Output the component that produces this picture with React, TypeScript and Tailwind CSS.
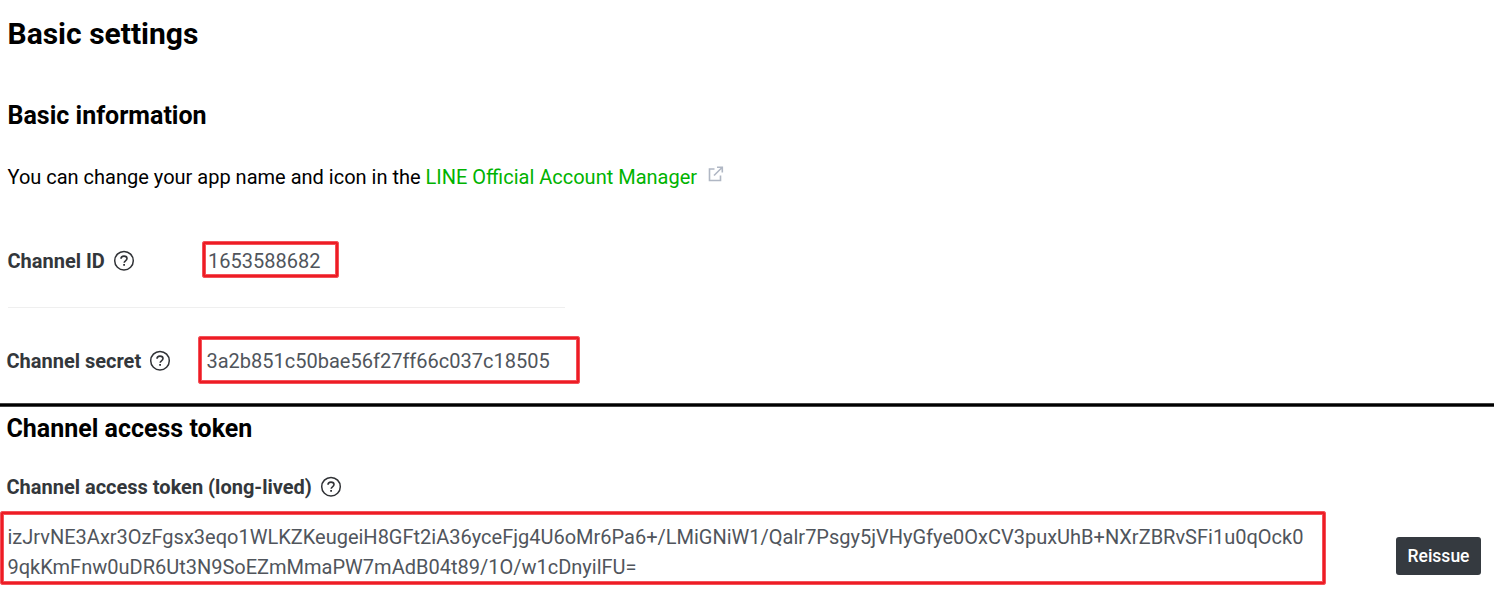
function Help() {
  return (
    <svg className="h-[22px] w-[22px] shrink-0" viewBox="0 0 22 22" fill="none" stroke="#303236">
      <circle cx="11" cy="10.7" r="9.3" strokeWidth="1.5" />
      <path d="M8 8.8C8 7.1 9.2 6.1 11 6.1c1.8 0 3 1 3 2.5 0 1.1-.6 1.6-1.5 2.2-.9.6-1.3 1-1.3 2" strokeWidth="1.6" />
      <path d="M11.1 13.9v1.8" strokeWidth="1.8" />
    </svg>
  );
}

export default function App() {
  return (
    <main className="h-[593px] w-full overflow-hidden bg-white font-['Roboto',sans-serif] text-[20px] leading-[30px] text-black">
      <section className="h-[403px] pl-[7.5px]">
        <h1 className="pt-[14px] text-[30px] leading-10 font-bold">Basic settings</h1>
        <h2 className="mt-[47px] text-[25px] leading-[30px] font-bold">Basic information</h2>
        <p className="mt-[31px] flex h-[30px] whitespace-pre">
          You can change your app name and icon in the <a className="text-[#00b300]">LINE Official Account Manager</a>
          <svg className="mt-1 ml-[11px] h-4 w-4" viewBox="0 0 16 16" fill="none" stroke="#b0b7c4" strokeWidth="1.6">
            <path d="M6.5 3H1.5v11.5H12.5V9.5M9 1.2H14.3v5.3M14.3 1.2 6 9.5" />
          </svg>
        </p>
        <div className="mt-[49px] flex h-[37px] items-center">
          <div className="flex w-[194.5px] items-center gap-2 pt-[2px] font-bold text-[#33373b]">Channel ID<Help /></div>
          <div className="flex h-[37px] w-[137px] items-center rounded-[2px] border border-[#f4525a] pt-[3px] pl-[5px] text-[#50555c] shadow-[inset_0_0_0_2px_#ed1c24,inset_0_0_0_3px_#f4525a]">1653588682</div>
        </div>
        <div className="mt-[29px] h-px w-[557px] bg-[#efefef]" />
        <div className="-ml-px mt-7 flex h-12 items-center">
          <div className="flex w-[191.5px] items-center gap-2 pt-[2px] font-bold text-[#33373b]">Channel secret<Help /></div>
          <div className="flex h-12 w-[382px] items-center rounded-[2px] border border-[#f4525a] pt-[2px] pl-[7.5px] text-[#50555c] shadow-[inset_0_0_0_2px_#ed1c24,inset_0_0_0_3px_#f4525a]">3a2b851c50bae56f27ff66c037c18505</div>
        </div>
      </section>
      <hr className="h-[4px] border-y border-[#444] bg-black" />
      <section>
        <h2 className="mt-[7px] ml-[6.5px] text-[25px] leading-[30px] font-bold">Channel access token</h2>
        <div className="mt-[28px] ml-[6.5px] flex h-[30px] items-center gap-2 font-bold text-[#33373b]">Channel access token (long-lived)<Help /></div>
        <div className="mt-[9px] flex">
          <div className="h-[74px] w-[1326px] rounded-[2px] border border-[#f4525a] pt-[10px] pl-[6.5px] text-[#50555c] shadow-[inset_0_0_0_2px_#ed1c24,inset_0_0_0_3px_#f4525a]">
            <p>izJrvNE3Axr3OzFgsx3eqo1WLKZKeugeiH8GFt2iA36yceFjg4U6oMr6Pa6+/LMiGNiW1/Qalr7Psgy5jVHyGfye0OxCV3puxUhB+NXrZBRvSFi1u0qOck0</p>
            <p>9qkKmFnw0uDR6Ut3N9SoEZmMmaPW7mAdB04t89/1O/w1cDnyilFU=</p>
          </div>
          <button className="mt-[26px] ml-[70px] h-[38px] w-[85px] rounded-[3px] bg-[#353a40] text-[17.5px] font-medium text-white">Reissue</button>
        </div>
      </section>
    </main>
  );
}
